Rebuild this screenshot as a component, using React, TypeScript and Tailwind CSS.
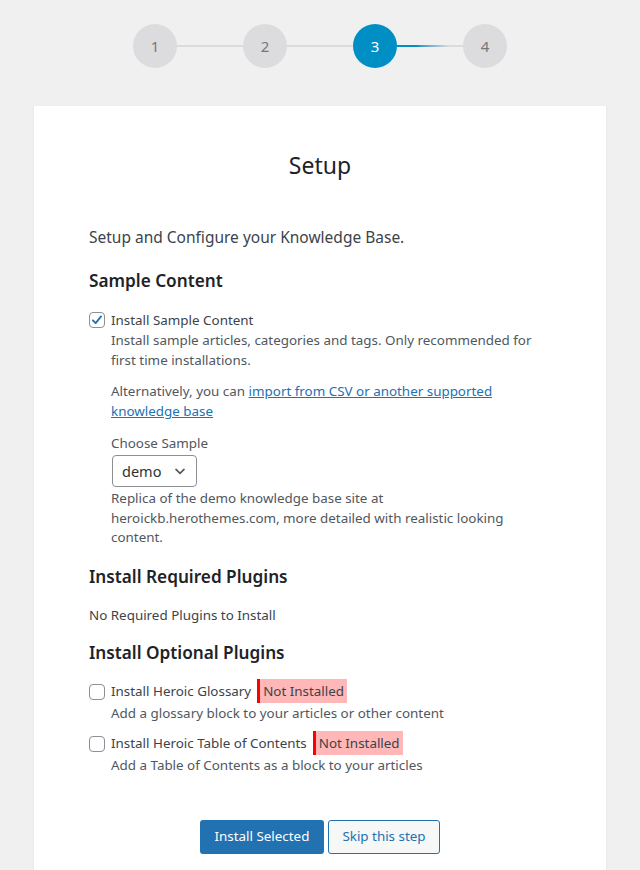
import React from "react";

const font = { fontFamily: '"Noto Sans", "Open Sans", sans-serif' };

function Step({ n, active }: { n: number; active?: boolean }) {
  return (
    <div
      className={
        "flex h-11 w-11 shrink-0 items-center justify-center rounded-full text-[15px] " +
        (active ? "bg-[#008fc4] text-white" : "bg-[#dcdcde] text-[#777]")
      }
    >
      {n}
    </div>
  );
}

function Checkbox({ checked }: { checked?: boolean }) {
  return (
    <span className="mt-[2px] flex h-4 w-4 shrink-0 items-center justify-center rounded-[4px] border border-[#8c8f94] bg-white">
      {checked && (
        <svg viewBox="0 0 20 20" className="h-[20px] w-[20px]">
          <path
            d="M4.2 10.4 8.1 14.4 15.8 4.8"
            fill="none"
            stroke="#2271b1"
            strokeWidth="2.6"
            strokeLinecap="round"
            strokeLinejoin="round"
          />
        </svg>
      )}
    </span>
  );
}

function Badge() {
  return (
    <span className="inline-block border-l-[3px] border-[#ff0000] bg-[#ffb7b7] px-[3px] leading-[24px] text-[#3c434a]">
      Not Installed
    </span>
  );
}

export default function App() {
  return (
    <div className="min-h-[870px] overflow-hidden bg-[#f0f0f1]" style={font}>
      {/* wizard progress */}
      <div className="flex items-center justify-center pt-6">
        <Step n={1} />
        <div className="h-[2px] w-[66px] bg-[#dcdcde]" />
        <Step n={2} />
        <div className="h-[2px] w-[66px] bg-[#dcdcde]" />
        <Step n={3} active />
        <div className="h-[2px] w-[66px] bg-gradient-to-r from-[#008fc4] from-30% to-[#dcdcde] to-80%" />
        <Step n={4} />
      </div>

      {/* setup card */}
      <div className="mx-auto mt-[38px] w-[572px] bg-white px-[55px] pb-10 pt-[44px] shadow-[0_1px_3px_rgba(0,0,0,0.06)]">
        <h1 className="text-center text-[23px] font-normal leading-[30px] text-[#1d2327]">Setup</h1>

        <p className="mt-[45px] text-[15.5px] leading-[24px] text-[#3c434a]">
          Setup and Configure your Knowledge Base.
        </p>

        <h2 className="mt-[20px] text-[17.2px] font-semibold leading-[24px] text-[#1d2327]">Sample Content</h2>

        <div className="mt-[17px] text-[13.4px] leading-[20px]">
          <label className="flex items-start gap-[6px] text-[#3c434a]">
            <Checkbox checked />
            <span>Install Sample Content</span>
          </label>
          <div className="pl-[22px] text-[#50575e]">
            <p>Install sample articles, categories and tags. Only recommended for first time installations.</p>
            <p className="mt-[11px]">
              Alternatively, you can{" "}
              <a href="#" className="text-[#2271b1] underline">
                import from CSV or another supported knowledge base
              </a>
            </p>
            <p className="mt-[12px]">Choose Sample</p>
            <div className="ml-px mt-[2px] flex h-8 w-[85px] items-center justify-between rounded-[4px] border border-[#8c8f94] pl-[9px] pr-[8px] text-[14.5px] text-[#2c3338]">
              <span>demo</span>
              <svg viewBox="0 0 20 20" className="h-4 w-4">
                <path d="M5 8l5 5 5-5" fill="none" stroke="#50575e" strokeWidth="2" strokeLinecap="round" strokeLinejoin="round" />
              </svg>
            </div>
            <p className="mt-[2px] leading-[19.5px]">
              Replica of the demo knowledge base site at heroickb.herothemes.com, more detailed with realistic looking
              content.
            </p>
          </div>
        </div>

        <h2 className="mt-[17px] text-[17.2px] font-semibold leading-[24px] text-[#1d2327]">Install Required Plugins</h2>
        <p className="mt-[16px] text-[13.4px] leading-[20px] text-[#3c434a]">No Required Plugins to Install</p>

        <h2 className="mt-[16px] text-[17.2px] font-semibold leading-[24px] text-[#1d2327]">Install Optional Plugins</h2>

        <div className="mt-[14px] text-[13.4px] leading-[20px]">
          <label className="flex items-center gap-[6px] text-[#3c434a]">
            <Checkbox />
            <span>Install Heroic Glossary</span>
            <Badge />
          </label>
          <p className="pl-[22px] text-[#50575e]">Add a glossary block to your articles or other content</p>
        </div>

        <div className="mt-[8px] text-[13.4px] leading-[20px]">
          <label className="flex items-center gap-[6px] text-[#3c434a]">
            <Checkbox />
            <span>Install Heroic Table of Contents</span>
            <Badge />
          </label>
          <p className="pl-[22px] text-[#50575e]">Add a Table of Contents as a block to your articles</p>
        </div>

        <div className="mt-[45px] flex justify-center gap-1 text-[13.4px]">
          <button className="h-[34px] rounded-[3px] bg-[#2271b1] px-[14.5px] text-white">Install Selected</button>
          <button className="h-[34px] rounded-[3px] border border-[#2271b1] bg-[#f6f7f7] px-[13.5px] text-[#2271b1]">
            Skip this step
          </button>
        </div>
      </div>
    </div>
  );
}
